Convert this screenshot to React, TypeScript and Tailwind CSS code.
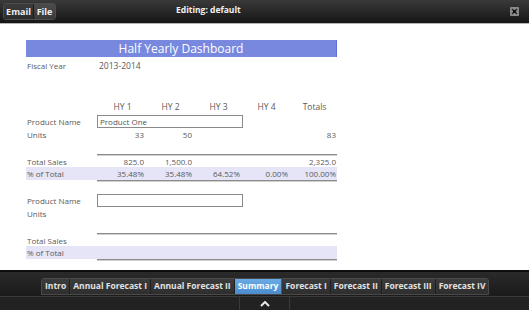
const cols = ["HY 1", "HY 2", "HY 3", "HY 4", "Totals"];

const tabs = [
  "Intro",
  "Annual Forecast I",
  "Annual Forecast II",
  "Summary",
  "Forecast I",
  "Forecast II",
  "Forecast III",
  "Forecast IV",
];

function Cells({ values }: { values: string[] }) {
  return (
    <>
      {values.map((v, i) => (
        <div key={i} className="w-[48px] text-right pr-[1px]">
          {v}
        </div>
      ))}
    </>
  );
}

function Block({
  product,
  units,
  sales,
  pct,
}: {
  product: string;
  units: string[];
  sales: string[];
  pct: string[];
}) {
  return (
    <div className="flex flex-col">
      <div className="flex items-center h-[13px]">
        <div className="w-[71px] pl-[1px]">Product Name</div>
        <div className="w-[146px] h-[13px] border border-[#8a8a8a] pl-[2px] leading-[11px] text-[#555]">
          {product}
        </div>
      </div>
      <div className="flex items-center h-[12px] mt-[1px]">
        <div className="w-[71px] pl-[1px]">Units</div>
        <Cells values={units} />
      </div>
      <div className="ml-[71px] mt-[13px] h-[1px] bg-[#8c8c8c] border-b border-[#d0d0d0] box-content" />
      <div className="flex items-center h-[11px]">
        <div className="w-[71px] pl-[1px]">Total Sales</div>
        <Cells values={sales} />
      </div>
      <div className="flex items-center h-[13px] bg-[#e5e5f7]">
        <div className="w-[71px] pl-[1px]">% of Total</div>
        <Cells values={pct} />
      </div>
      <div className="ml-[71px] h-[1px] bg-[#8c8c8c] border-b border-[#d0d0d0] box-content" />
    </div>
  );
}

export default function App() {
  return (
    <div
      className="w-[529px] h-[310px] flex flex-col overflow-hidden bg-white"
      style={{ fontFamily: '"Open Sans", "Noto Sans", sans-serif' }}
    >
      {/* top bar */}
      <div className="h-[23px] bg-gradient-to-b from-[#3a3a3a] to-[#161616] flex items-center relative">
        <div className="ml-[3px] flex h-[17px] rounded-[3px] border border-[#4d4d4d] overflow-hidden text-[9px] font-bold text-[#f0f0f0]">
          <div className="w-[30px] flex items-center justify-center bg-gradient-to-b from-[#3c3c3c] to-[#2c2c2c] border-r border-[#1c1c1c]">
            Email
          </div>
          <div className="w-[21px] flex items-center justify-center bg-gradient-to-b from-[#4c4c4c] to-[#3a3a3a]">
            File
          </div>
        </div>
        <div className="ml-[120px] text-[8.5px] font-bold text-[#f2f2f2] -mt-[3px]">
          Editing: default
        </div>
        <svg className="absolute right-[10px] top-[7px]" width="9" height="9" viewBox="0 0 9 9">
          <rect x="0" y="0" width="9" height="9" rx="1" fill="#8a8a8a" />
          <path d="M2 2 L7 7 M7 2 L2 7" stroke="#2a2a2a" strokeWidth="1.6" />
          <rect x="3" y="3" width="3" height="3" fill="#111" />
        </svg>
      </div>
      <div className="h-[1px] bg-[#b5b5b5]" />

      {/* content */}
      <div className="flex-1 pl-[26px] text-[8px] text-[#5a5a5a]">
        <div className="w-[311px] flex flex-col">
          <div className="mt-[16px] h-[17px] bg-[#7888de] border-r border-[#6070d0] text-white text-[12px] leading-[17px] text-center">
            Half Yearly Dashboard
          </div>
          <div className="flex items-center h-[12px] mt-[3px]">
            <div className="w-[73px] pl-[1px]">Fiscal Year</div>
            <div className="text-[8.5px]">2013-2014</div>
          </div>
          <div className="flex items-center h-[12px] mt-[29px] text-[8.5px]">
            <div className="w-[71px]" />
            {cols.map((c) => (
              <div key={c} className="w-[48px] text-center pl-[3px]">
                {c}
              </div>
            ))}
          </div>
          <div className="mt-[2px]">
            <Block
              product="Product One"
              units={["33", "50", "", "", "83"]}
              sales={["825.0", "1,500.0", "", "", "2,325.0"]}
              pct={["35.48%", "35.48%", "64.52%", "0.00%", "100.00%"]}
            />
          </div>
          <div className="mt-[12px]">
            <Block
              product=""
              units={["", "", "", "", ""]}
              sales={["", "", "", "", ""]}
              pct={["", "", "", "", ""]}
            />
          </div>
        </div>
      </div>

      {/* bottom bar */}
      <div className="h-[40px] bg-[#1b1b1b] flex flex-col border-t-2 border-[#0e0e0e]">
        <div className="h-[24px] flex items-end pb-[1px] pl-[41px] bg-gradient-to-b from-[#2a2a2a] to-[#1b1b1b]">
          <div className="flex h-[17px] rounded-t-[3px] overflow-hidden border border-[#4a4a4a] text-[8.5px] font-bold">
            {tabs.map((t) => (
              <div
                key={t}
                className={
                  t === "Summary"
                    ? "px-[3px] flex items-center bg-gradient-to-b from-[#6aaae6] to-[#4a8ccc] text-white border-r border-[#2d5f8f]"
                    : "px-[3px] flex items-center bg-gradient-to-b from-[#3c3c3c] to-[#2e2e2e] text-[#e2e2e2] border-r border-[#1f1f1f] last:border-r-0"
                }
              >
                {t}
              </div>
            ))}
          </div>
        </div>
        <div className="flex-1 flex border-t border-[#3a3a3a] bg-[#222]">
          <div className="w-[240px] border-r border-[#3a3a3a]" />
          <div className="w-[50px] flex items-center justify-center border-r border-[#3a3a3a]">
            <svg width="10" height="6" viewBox="0 0 10 6">
              <path d="M1 5 L5 1 L9 5" stroke="#e8e8e8" strokeWidth="2" fill="none" />
            </svg>
          </div>
          <div className="flex-1" />
        </div>
      </div>
    </div>
  );
}
